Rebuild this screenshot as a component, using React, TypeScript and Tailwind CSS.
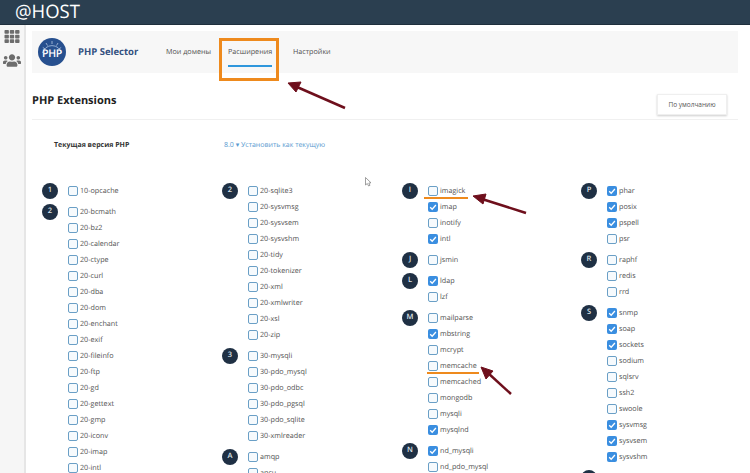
import React from "react";
import { FaTh, FaUsers } from "react-icons/fa";

type Item = [string, boolean?];
type Group = { l: string; items: Item[] };
const u = (...n: string[]): Item[] => n.map((x) => [x]);

const cols: Group[][] = [
  [
    { l: "1", items: u("10-opcache") },
    { l: "2", items: u("20-bcmath", "20-bz2", "20-calendar", "20-ctype", "20-curl", "20-dba", "20-dom", "20-enchant", "20-exif", "20-fileinfo", "20-ftp", "20-gd", "20-gettext", "20-gmp", "20-iconv", "20-imap", "20-intl") },
  ],
  [
    { l: "2", items: u("20-sqlite3", "20-sysvmsg", "20-sysvsem", "20-sysvshm", "20-tidy", "20-tokenizer", "20-xml", "20-xmlwriter", "20-xsl", "20-zip") },
    { l: "3", items: u("30-mysqli", "30-pdo_mysql", "30-pdo_odbc", "30-pdo_pgsql", "30-pdo_sqlite", "30-xmlreader") },
    { l: "A", items: u("amqp", "apcu") },
  ],
  [
    { l: "I", items: [["imagick"], ["imap", true], ["inotify"], ["intl", true]] },
    { l: "J", items: u("jsmin") },
    { l: "L", items: [["ldap", true], ["lzf"]] },
    { l: "M", items: [["mailparse"], ["mbstring", true], ["mcrypt"], ["memcache"], ["memcached"], ["mongodb"], ["mysqli"], ["mysqlnd", true]] },
    { l: "N", items: [["nd_mysqli", true], ["nd_pdo_mysql"]] },
  ],
  [
    { l: "P", items: [["phar", true], ["posix", true], ["pspell", true], ["psr"]] },
    { l: "R", items: u("raphf", "redis", "rrd") },
    { l: "S", items: [["snmp", true], ["soap", true], ["sockets", true], ["sodium"], ["sqlsrv"], ["ssh2"], ["swoole"], ["sysvmsg", true], ["sysvsem", true], ["sysvshm", true]] },
    { l: "T", items: u("tidy") },
  ],
];

function Check({ on }: { on?: boolean }) {
  return on ? (
    <span className="w-[10px] h-[10px] rounded-[2px] bg-[#3a8ee0] flex items-center justify-center shrink-0">
      <svg viewBox="0 0 10 10" className="w-[10px] h-[10px]">
        <path d="M2.2 5.2 L4.2 7.2 L7.9 3" fill="none" stroke="#fff" strokeWidth="1.3" />
      </svg>
    </span>
  ) : (
    <span className="w-[10px] h-[10px] rounded-[2px] border border-[#6a9fc6] bg-[#f6fafd] shrink-0" />
  );
}

function PhpLogo() {
  return (
    <div className="relative w-[28px] h-[28px] rounded-full bg-[#27508f] flex items-center justify-center overflow-hidden">
      <svg viewBox="0 0 28 28" className="absolute inset-0 w-[28px] h-[28px]">
        <path d="M4.5 15 A9.8 9.8 0 0 1 23.5 15" fill="none" stroke="#a9c1e2" strokeWidth="0.8" />
        <path d="M14 3v3M8 5l1.5 2.5M20 5l-1.5 2.5M4.8 9.5l2.4 1.5M23.2 9.5l-2.4 1.5" stroke="#c7d7ec" strokeWidth="0.7" />
      </svg>
      <span className="relative mt-[5px] text-[10.5px] font-semibold leading-none tracking-[-0.3px] text-white">PHP</span>
    </div>
  );
}

export default function App() {
  return (
    <div className="relative w-[750px] h-[473px] overflow-hidden bg-white flex flex-col font-['Open_Sans',sans-serif] text-[7.2px] text-[#505050] [text-rendering:geometricPrecision]">
      <header className="h-[25px] shrink-0 bg-[#2b3f50] border-b border-[#1f2f3d] pl-[15px] flex items-center">
        <span className="text-[18.5px] leading-none font-medium text-white">@HOST</span>
      </header>
      <div className="flex flex-1 min-h-0">
        <aside className="w-[26px] shrink-0 bg-[#f6f6f6] border-r-2 border-[#e6e6e6] flex flex-col items-center pr-[1px] pt-[4px] gap-[9px] text-[#6d6d6d]">
          <FaTh className="w-[16px] h-[15px]" />
          <FaUsers className="w-[18px] h-[15px]" />
        </aside>
        <main className="flex-1 min-w-0 pl-[6px] pr-[12px] pt-[6px]">
          <nav className="h-[42px] bg-[#f7f7f7] flex items-center pl-[6px]">
            <PhpLogo />
            <span className="ml-[12px] w-[88px] text-[9.5px] font-bold text-[#33507f]">PHP Selector</span>
            <span className="w-[62px]">Мои домены</span>
            <span className="w-[65px] relative">
              Расширения
              <span className="absolute left-0 top-[18px] w-[44px] h-[2px] bg-[#2f97dc]" />
            </span>
            <span>Настройки</span>
          </nav>
          <div className="h-[47px] border-b border-[#f0f0f0] flex items-center justify-between">
            <h1 className="text-[11px] font-bold text-[#222] mt-[11px]">PHP Extensions</h1>
            <button className="w-[70px] h-[21px] mr-[11px] mt-[17px] bg-white border border-[#efefef] shadow-[0_1px_2px_rgba(0,0,0,0.2)] text-[6.5px] text-[#555]">
              По умолчанию
            </button>
          </div>
          <div className="h-[47px] flex items-center pl-[22px] pt-[5px]">
            <span className="w-[170px] font-bold text-[7px] text-[#333]">Текущая версия PHP</span>
            <span className="text-[7px] text-[#5b9bd0]">8.0 ▾ Установить как текущую</span>
          </div>
          <div className="mt-[16px] pl-[10px] grid grid-cols-[180px_180px_179px_1fr]">
            {cols.map((groups, i) => (
              <div key={i} className="flex flex-col gap-[5px]">
                {groups.map((g, j) => (
                  <div key={j} className="flex gap-[10px]">
                    <span className="w-[16px] h-[16px] rounded-full bg-[#1f3044] text-[#dfe5ea] flex items-center justify-center text-[7.5px] font-semibold shrink-0">
                      {g.l}
                    </span>
                    <div className="flex flex-col">
                      {g.items.map(([name, on]) => (
                        <div key={name} className="h-[16px] flex items-center gap-[2px]">
                          <Check on={on} />
                          <span className="leading-none whitespace-nowrap pt-[1px]">{name}</span>
                        </div>
                      ))}
                    </div>
                  </div>
                ))}
              </div>
            ))}
          </div>
        </main>
      </div>

      <div className="absolute left-[219px] top-[38px] w-[60px] h-[43px] border-[3px] border-[#ee8a1d]" />
      <div className="absolute left-[424px] top-[197px] w-[44px] h-[2px] bg-[#ee8a1d]" />
      <div className="absolute left-[427px] top-[372px] w-[52px] h-[2px] bg-[#ee8a1d]" />
      <svg className="absolute inset-0 w-[750px] h-[473px] pointer-events-none" viewBox="0 0 750 473">
        <g fill="#6e0f1c" stroke="#6e0f1c">
          <path d="M345 108 L297 87" strokeWidth="2.5" fill="none" />
          <path d="M288 83 L301 82 L296 92 Z" />
          <path d="M526 213 L482 199" strokeWidth="2.5" fill="none" />
          <path d="M473 196 L486 194 L483 204 Z" />
          <path d="M511 394 L488 373" strokeWidth="2.5" fill="none" />
          <path d="M481 367 L493 371 L486 379 Z" />
        </g>
        <path d="M365.5 177.5 L365.5 185 L367.3 183.5 L368.6 186 L370 185.3 L368.8 183 L371 182.8 Z" fill="#fff" stroke="#777" strokeWidth="0.7" />
      </svg>
    </div>
  );
}
